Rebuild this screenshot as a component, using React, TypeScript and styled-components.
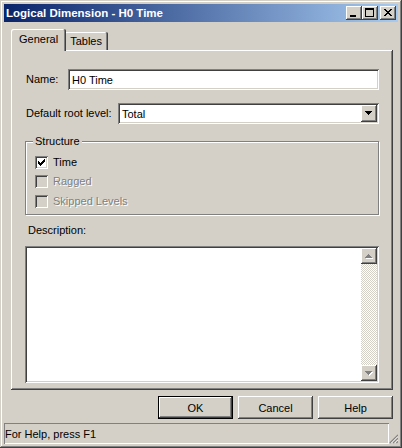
import React from "react";
import styled, { createGlobalStyle, css } from "styled-components";

const Global = createGlobalStyle`
  html, body { margin: 0; padding: 0; background: #d4d0c8; }
  body { font-family: "Liberation Sans", Arial, sans-serif; font-size: 11px; }
`;

const raised = css`
  box-shadow: inset -1px -1px #404040, inset 1px 1px #ffffff,
    inset -2px -2px #808080, inset 2px 2px #d4d0c8;
`;

const sunken = css`
  box-shadow: inset 1px 1px #808080, inset -1px -1px #ffffff,
    inset 2px 2px #404040, inset -2px -2px #d4d0c8;
`;

const Window = styled.div`
  width: 402px;
  height: 448px;
  box-sizing: border-box;
  padding: 4px;
  background: #d4d0c8;
  box-shadow: inset -1px -1px #404040, inset 1px 1px #d4d0c8,
    inset -2px -2px #808080, inset 2px 2px #ffffff;
  display: flex;
  flex-direction: column;
  font-family: "Liberation Sans", Arial, sans-serif;
  font-size: 11px;
  color: #000;
`;

const TitleBar = styled.div`
  height: 18px;
  flex: none;
  display: flex;
  align-items: center;
  padding-left: 2px;
  background: linear-gradient(to right, #0a246a, #a6caf0);
  color: #fff;
  font-weight: bold;
  font-size: 11.5px;
`;

const TitleText = styled.span`
  flex: 1;
  white-space: nowrap;
`;

const TitleButton = styled.div<{ $gap?: number }>`
  width: 16px;
  height: 14px;
  background: #d4d0c8;
  ${raised};
  margin-right: ${(p) => p.$gap ?? 0}px;
  display: flex;
  svg { display: block; }
`;

const TabStrip = styled.div`
  height: 21px;
  flex: none;
  display: flex;
  align-items: flex-end;
  padding-left: 2px;
  margin: 7px 5px 0 7px;
`;

const Tab = styled.div<{ $active?: boolean }>`
  position: relative;
  box-sizing: border-box;
  display: flex;
  align-items: center;
  background: #d4d0c8;
  border-radius: 2px 2px 0 0;
  box-shadow: inset -1px 0 #404040, inset 1px 1px #ffffff, inset -2px 0 #808080;
  ${(p) =>
    p.$active
      ? css`
          height: 22px;
          margin: 0 -2px -1px -2px;
          padding: 0 8px 2px 8px;
          z-index: 1;
        `
      : css`
          height: 18px;
          padding: 0 6px 1px 6px;
        `}
`;

const Panel = styled.div`
  height: 340px;
  flex: none;
  box-sizing: border-box;
  margin: 0 5px 0 7px;
  padding: 19px 14px 0 14px;
  background: #d4d0c8;
  box-shadow: inset -1px -1px #404040, inset 1px 1px #ffffff, inset -2px -2px #808080;
  display: flex;
  flex-direction: column;
`;

const FieldRow = styled.div<{ $gap?: number }>`
  height: 21px;
  display: flex;
  align-items: center;
  margin-bottom: ${(p) => p.$gap ?? 0}px;
`;

const Label = styled.label<{ $w: number }>`
  width: ${(p) => p.$w}px;
  padding-left: 1px;
  box-sizing: border-box;
  flex: none;
  line-height: 13px;
  white-space: nowrap;
`;

const TextBox = styled.div`
  flex: 1;
  height: 21px;
  box-sizing: border-box;
  background: #fff;
  ${sunken};
  padding: 0 4px;
  display: flex;
  align-items: center;
`;

const Combo = styled.div`
  flex: 1;
  height: 21px;
  box-sizing: border-box;
  background: #fff;
  ${sunken};
  padding: 2px 2px 2px 4px;
  display: flex;
  align-items: center;
`;

const ComboText = styled.span`
  flex: 1;
`;

const ArrowButton = styled.div<{ $h: number }>`
  width: 16px;
  height: ${(p) => p.$h}px;
  flex: none;
  background: #d4d0c8;
  ${raised};
  display: flex;
  align-items: center;
  justify-content: center;
`;

const GroupBox = styled.div`
  position: relative;
  height: 74px;
  margin-top: 17px;
  box-sizing: border-box;
  border: 1px solid #808080;
  box-shadow: inset 1px 1px #ffffff, 1px 1px #ffffff;
  padding: 14px 0 0 9px;
  display: flex;
  flex-direction: column;
`;

const Legend = styled.span`
  position: absolute;
  top: -7px;
  left: 7px;
  padding: 0 2px;
  background: #d4d0c8;
  line-height: 13px;
`;

const CheckRow = styled.div<{ $disabled?: boolean }>`
  height: 21px;
  display: flex;
  align-items: flex-start;
  gap: 5px;
  color: ${(p) => (p.$disabled ? "#808080" : "#000")};
  text-shadow: ${(p) => (p.$disabled ? "1px 1px #ffffff" : "none")};
  line-height: 13px;
`;

const CheckBox = styled.div<{ $disabled?: boolean }>`
  width: 13px;
  height: 13px;
  flex: none;
  box-sizing: border-box;
  background: ${(p) => (p.$disabled ? "#d4d0c8" : "#fff")};
  ${sunken};
  svg { display: block; }
`;

const DescLabel = styled.div`
  margin-top: 9px;
  padding-left: 3px;
  line-height: 13px;
`;

const TextArea = styled.div`
  margin-top: 9px;
  height: 137px;
  box-sizing: border-box;
  background: #fff;
  ${sunken};
  padding: 2px;
  display: flex;
  justify-content: flex-end;
`;

const ScrollBar = styled.div`
  width: 16px;
  display: flex;
  flex-direction: column;
`;

const Track = styled.div`
  flex: 1;
  background-color: #fff;
  background-image: repeating-conic-gradient(#d4d0c8 0% 25%, #ffffff 0% 50%);
  background-size: 2px 2px;
`;

const ButtonRow = styled.div`
  margin: 6px 5px 0 0;
  display: flex;
  justify-content: flex-end;
  gap: 5px;
`;

const Button = styled.div<{ $default?: boolean }>`
  width: 75px;
  height: 23px;
  box-sizing: border-box;
  background: #d4d0c8;
  display: flex;
  align-items: center;
  justify-content: center;
  ${(p) =>
    p.$default
      ? css`
          border: 1px solid #000;
          box-shadow: inset -1px -1px #404040, inset 1px 1px #ffffff,
            inset -2px -2px #808080;
        `
      : raised}
`;

const StatusBar = styled.div`
  margin-top: 4px;
  height: 21px;
  display: flex;
  align-items: stretch;
`;

const StatusPane = styled.div`
  flex: 1;
  box-shadow: inset 1px 1px #808080, inset -1px -1px #ffffff;
  display: flex;
  align-items: center;
  padding-left: 1px;
`;

const Grip = styled.div`
  width: 9px;
  display: flex;
  align-items: flex-end;
  justify-content: flex-end;
  svg { display: block; }
`;

const CheckMark = () => (
  <svg width="13" height="13" viewBox="0 0 13 13" shapeRendering="crispEdges">
    {[2, 3, 4, 3, 2, 1, 0].map((y, i) => (
      <rect key={i} x={3 + i} y={3 + y} width="1" height="3" fill="#000" />
    ))}
  </svg>
);

const Triangle = ({ up, disabled }: { up?: boolean; disabled?: boolean }) => {
  const rows = [7, 5, 3, 1];
  const order = up ? [...rows].reverse() : rows;
  return (
    <svg width="8" height="5" viewBox="0 0 8 5" shapeRendering="crispEdges">
      {disabled &&
        order.map((w, i) => (
          <rect key={"s" + i} x={(7 - w) / 2 + 1} y={i + 1} width={w} height="1" fill="#fff" />
        ))}
      {order.map((w, i) => (
        <rect key={i} x={(7 - w) / 2} y={i} width={w} height="1" fill={disabled ? "#808080" : "#000"} />
      ))}
    </svg>
  );
};

const CloseGlyph = () => (
  <svg width="16" height="14" viewBox="0 0 16 14" shapeRendering="crispEdges">
    {[
      [0, 1],
      [1, 2],
      [2, 3],
      [3, 4],
      [4, 5],
      [5, 6],
      [6, 7],
    ].map(([y], i) => {
      const rows = [
        [0, 7],
        [1, 6],
        [2, 5],
        [3, 4],
        [2, 5],
        [1, 6],
        [0, 7],
      ];
      const [a, b] = rows[i];
      return (
        <g key={i}>
          <rect x={4 + a} y={3 + y} width="2" height="1" fill="#000" />
          <rect x={4 + b - 1} y={3 + y} width="2" height="1" fill="#000" />
        </g>
      );
    })}
  </svg>
);

const MaxGlyph = () => (
  <svg width="16" height="14" viewBox="0 0 16 14" shapeRendering="crispEdges">
    <rect x="3" y="2" width="9" height="2" fill="#000" />
    <rect x="3" y="2" width="1" height="9" fill="#000" />
    <rect x="11" y="2" width="1" height="9" fill="#000" />
    <rect x="3" y="10" width="9" height="1" fill="#000" />
  </svg>
);

const MinGlyph = () => (
  <svg width="16" height="14" viewBox="0 0 16 14" shapeRendering="crispEdges">
    <rect x="4" y="9" width="6" height="2" fill="#000" />
  </svg>
);

const GripGlyph = () => (
  <svg width="11" height="11" viewBox="0 0 11 11">
    {[0, 4, 8].map((o) => (
      <g key={o}>
        <line x1={o + 1} y1="11" x2="11" y2={o + 1} stroke="#808080" strokeWidth="1.4" />
        <line x1={o + 3} y1="11" x2="11" y2={o + 3} stroke="#ffffff" strokeWidth="1" />
      </g>
    ))}
  </svg>
);

export default function App() {
  return (
    <>
      <Global />
      <Window>
        <TitleBar>
          <TitleText>Logical Dimension - H0 Time</TitleText>
          <TitleButton>
            <MinGlyph />
          </TitleButton>
          <TitleButton $gap={2}>
            <MaxGlyph />
          </TitleButton>
          <TitleButton $gap={2}>
            <CloseGlyph />
          </TitleButton>
        </TitleBar>
        <TabStrip>
          <Tab $active>General</Tab>
          <Tab>Tables</Tab>
        </TabStrip>
        <Panel>
          <FieldRow $gap={13}>
            <Label $w={43}>Name:</Label>
            <TextBox>H0 Time</TextBox>
          </FieldRow>
          <FieldRow>
            <Label $w={93}>Default root level:</Label>
            <Combo>
              <ComboText>Total</ComboText>
              <ArrowButton $h={17}>
                <Triangle />
              </ArrowButton>
            </Combo>
          </FieldRow>
          <GroupBox>
            <Legend>Structure</Legend>
            <CheckRow>
              <CheckBox>
                <CheckMark />
              </CheckBox>
              Time
            </CheckRow>
            <CheckRow $disabled>
              <CheckBox $disabled />
              Ragged
            </CheckRow>
            <CheckRow $disabled>
              <CheckBox $disabled />
              Skipped Levels
            </CheckRow>
          </GroupBox>
          <DescLabel>Description:</DescLabel>
          <TextArea>
            <ScrollBar>
              <ArrowButton $h={16}>
                <Triangle up disabled />
              </ArrowButton>
              <Track />
              <ArrowButton $h={16}>
                <Triangle disabled />
              </ArrowButton>
            </ScrollBar>
          </TextArea>
        </Panel>
        <ButtonRow>
          <Button $default>OK</Button>
          <Button>Cancel</Button>
          <Button>Help</Button>
        </ButtonRow>
        <StatusBar>
          <StatusPane>For Help, press F1</StatusPane>
          <Grip>
            <GripGlyph />
          </Grip>
        </StatusBar>
      </Window>
    </>
  );
}
